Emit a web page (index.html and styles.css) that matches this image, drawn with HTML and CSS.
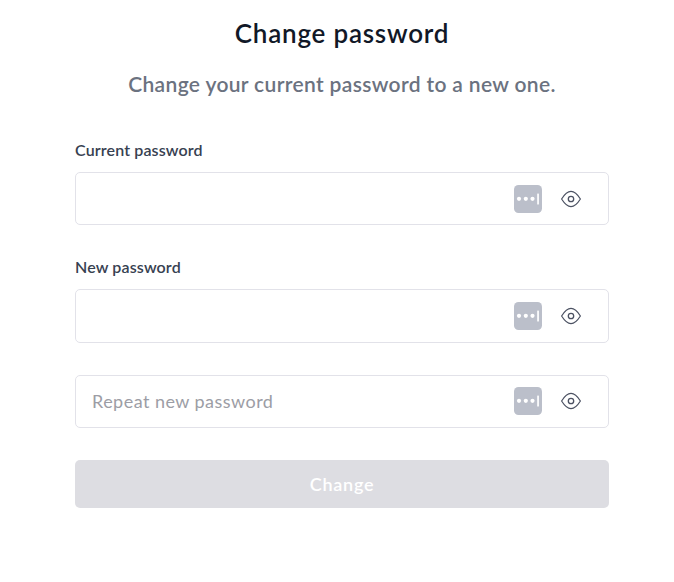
FILE: index.html
```
<!DOCTYPE html>
<html lang="en">
<head>
  <meta charset="UTF-8">
  <meta name="viewport" content="width=device-width, initial-scale=1.0">
  <title>Change password</title>
  <link rel="stylesheet" href="styles.css">
</head>
<body>
  <!-- Icons shared by all password fields -->
  <svg class="sprite" aria-hidden="true">
    <symbol id="icon-manager" viewBox="0 0 28 28">
      <rect width="28" height="28" rx="4.5" fill="#bbbfca"/>
      <circle cx="5" cy="13.8" r="2.1" fill="#fff"/>
      <circle cx="11.8" cy="13.8" r="2.1" fill="#fff"/>
      <circle cx="18.5" cy="13.8" r="2.1" fill="#fff"/>
      <rect x="23.2" y="8.4" width="1.7" height="11" rx="0.5" fill="#fff"/>
    </symbol>
    <symbol id="icon-eye" viewBox="0 0 20 18">
      <path d="M0.6 9C3.600 4.200 6 1.400 10 1.400S16.400 4.200 19.400 9C16.400 13.800 14 16.600 10 16.600S3.600 13.800 0.600 9Z" fill="none" stroke="#4b5162" stroke-width="1.200" stroke-linejoin="round"/>
      <circle cx="10" cy="9" r="2.700" fill="none" stroke="#4b5162" stroke-width="1.300"/>
    </symbol>
  </svg>

  <div class="container">
    <h1>Change password</h1>
    <p class="subtitle">Change your current password to a new one.</p>
    <form id="passwordForm">
      <div class="form-group">
        <label for="currentPassword">Current password</label>
        <div class="field">
          <input type="password" id="currentPassword">
          <svg class="manager"><use href="#icon-manager"/></svg>
          <button type="button" class="toggle" aria-label="Show password"><svg><use href="#icon-eye"/></svg></button>
        </div>
      </div>
      <div class="form-group">
        <label for="newPassword">New password</label>
        <div class="field">
          <input type="password" id="newPassword">
          <svg class="manager"><use href="#icon-manager"/></svg>
          <button type="button" class="toggle" aria-label="Show password"><svg><use href="#icon-eye"/></svg></button>
        </div>
      </div>
      <div class="form-group">
        <div class="field">
          <input type="password" id="repeatPassword" placeholder="Repeat new password">
          <svg class="manager"><use href="#icon-manager"/></svg>
          <button type="button" class="toggle" aria-label="Show password"><svg><use href="#icon-eye"/></svg></button>
        </div>
      </div>
      <button type="submit" class="submit" disabled>Change</button>
    </form>
  </div>
  <script>
    // Show or hide the password next to the clicked eye
    document.querySelectorAll('.toggle').forEach(function(btn) {
      btn.addEventListener('click', function() {
        const input = btn.parentElement.querySelector('input');
        input.type = input.type === 'password' ? 'text' : 'password';
      });
    });
  </script>
</body>
</html>
```
FILE: styles.css
```
* {
  box-sizing: border-box;
}
body {
  margin: 0;
  background: #fff;
  font-family: Lato, sans-serif;
}
.sprite {
  display: none;
}
.container {
  width: 534px;
  margin: 0 65px 0 75px;
  padding-top: 16px;
}
h1 {
  margin: 0;
  font-size: 26px;
  line-height: 34px;
  font-weight: 600;
  letter-spacing: 0.78px;
  text-align: center;
  color: #111827;
}
.subtitle {
  margin: 20px 0 0;
  font-size: 21px;
  line-height: 28px;
  font-weight: 600;
  letter-spacing: 0.35px;
  text-align: center;
  color: #6b7280;
}
form {
  margin-top: 42px;
}
.form-group {
  margin-bottom: 32px;
}
label {
  display: block;
  margin-bottom: 12px;
  font-size: 16px;
  line-height: 20px;
  font-weight: 600;
  letter-spacing: 0.13px;
  color: #374151;
}
.field {
  display: flex;
  align-items: center;
  height: 53.3px;
  padding: 0 27.5px 0 16px;
  border: 1px solid #e2e2e9;
  border-radius: 5px;
}
.field input {
  flex: 1;
  min-width: 0;
  padding: 0;
  border: none;
  outline: none;
  background: none;
  font: 18px/26px Lato, sans-serif;
  letter-spacing: 0.46px;
  color: #374151;
}
.field input::placeholder {
  color: #9c9da5;
}
.manager {
  width: 28px;
  height: 28px;
  margin-right: 18.5px;
}
.toggle {
  display: flex;
  padding: 0;
  border: none;
  background: none;
  cursor: pointer;
}
.toggle svg {
  width: 20px;
  height: 18px;
}
.submit {
  display: block;
  width: 100%;
  height: 48px;
  padding: 0;
  border: none;
  border-radius: 5px;
  background: #dddde2;
  color: #fff;
  font: 600 18px/26px Lato, sans-serif;
  letter-spacing: 0.75px;
}
```
